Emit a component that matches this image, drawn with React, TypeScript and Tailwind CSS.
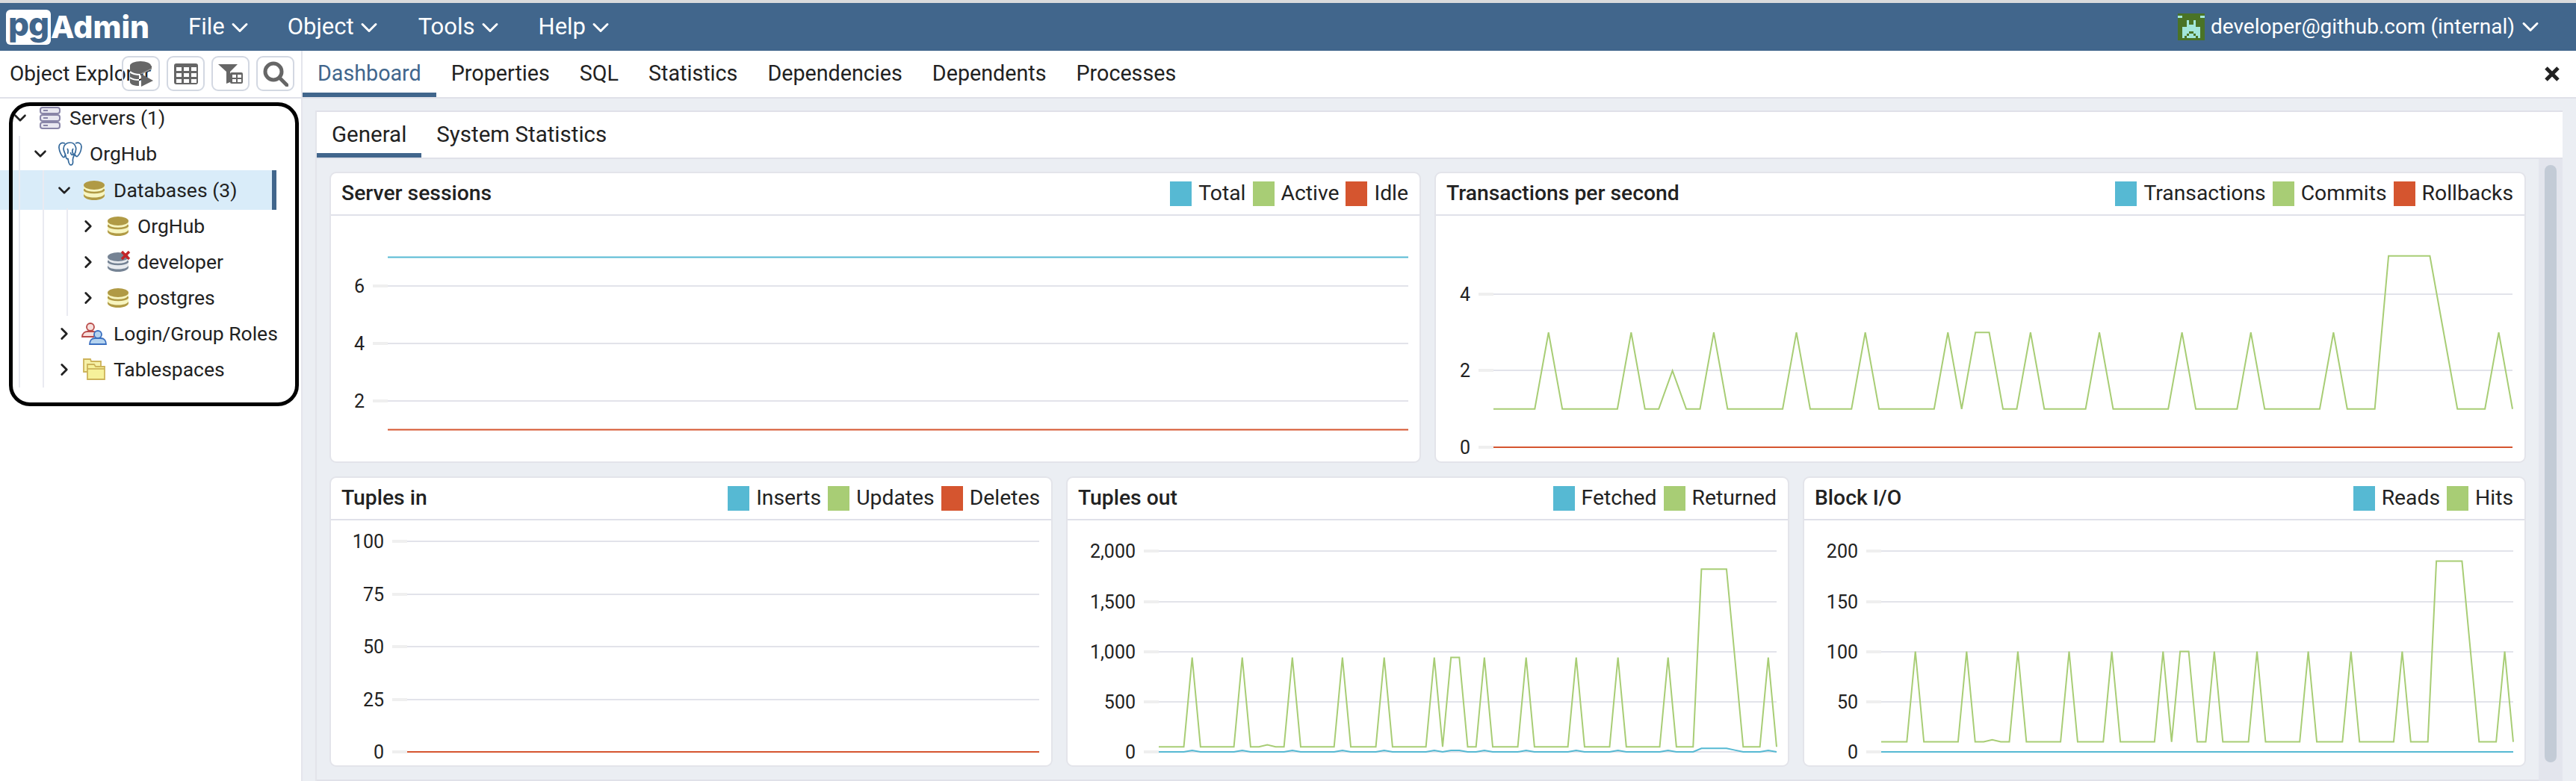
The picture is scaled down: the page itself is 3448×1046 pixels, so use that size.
import { ChevronDown, ChevronRight } from 'lucide-react';
import type { ReactNode } from 'react';

const BLUE = '#56b9d3';
const GREEN = '#a8cd75';
const ORANGE = '#d5552f';

const PEAKS = [4, 10, 16, 22, 27, 33, 35, 36, 39, 44, 50, 55, 61, 73];

// same traffic shape in every chart, only the values differ
const series = (base: number, peak: number, small: number, top: number) => {
  const out: number[] = Array(75).fill(base);
  PEAKS.forEach((i) => (out[i] = peak));
  out[13] = small;
  [65, 66, 67, 68].forEach((i) => (out[i] = top));
  out[69] = (top + base) / 2;
  return out;
};

interface Tick {
  label: string;
  y: number;
}

interface ChartProps {
  width: number;
  height: number;
  x0: number;
  x1: number;
  ticks: Tick[];
  // value to y: two reference points
  scale: [number, number, number, number];
  lines: { color: string; values: number[] }[];
}

const Chart = ({ width, height, x0, x1, ticks, scale, lines }: ChartProps) => {
  const [v0, y0, v1, y1] = scale;
  const toY = (v: number) => y0 + ((v - v0) / (v1 - v0)) * (y1 - y0);
  return (
    <svg width={width} height={height} className="block">
      {ticks.map((t) => (
        <g key={t.label}>
          <rect x={x0 - 20} y={t.y - 2} width={20} height={4} fill="#efefef" />
          <rect x={x0} y={t.y - 1} width={x1 - x0} height={2} fill="#e2e3ea" />
          <text x={x0 - 31} y={t.y + 9} textAnchor="end" fontSize={25} fill="#222">
            {t.label}
          </text>
        </g>
      ))}
      {lines.map((l) => (
        <polyline
          key={l.color}
          fill="none"
          stroke={l.color}
          strokeWidth={2}
          points={l.values
            .map((v, i) => `${x0 + ((x1 - x0) * i) / (l.values.length - 1)},${toY(v)}`)
            .join(' ')}
        />
      ))}
    </svg>
  );
};

const Card = ({
  title,
  legend,
  className,
  children,
}: {
  title: string;
  legend: [string, string][];
  className: string;
  children: ReactNode;
}) => (
  <div className={`flex flex-col rounded-[9px] border-2 border-[#e3e4ea] bg-white overflow-hidden ${className}`}>
    <div className="flex items-center justify-between h-[57px] pl-[14px] pr-[15px] border-b-2 border-[#e0e1e9] shrink-0">
      <span className="text-[28.300px] font-medium text-[#222]">{title}</span>
      <div className="flex items-center gap-[9px]">
        {legend.map(([name, color]) => (
          <div key={name} className="flex items-center gap-[9px]">
            <span className="w-[29px] h-[33px]" style={{ background: color }} />
            <span className="text-[28.300px] text-[#222]">{name}</span>
          </div>
        ))}
      </div>
    </div>
    {children}
  </div>
);

const DbIcon = ({ dark = '#b09a45', light = '#f7f5c0' }: { dark?: string; light?: string }) => (
  <svg width="28" height="26" viewBox="0 0 28 26" className="shrink-0">
    <path d="M0 6v14c0 3.3 6.3 6 14 6s14-2.7 14-6V6z" fill={light} />
    <ellipse cx="14" cy="6" rx="14" ry="6" fill={dark} />
    <path d="M0 11.5c2 3 7 4.5 14 4.5s12-1.5 14-4.5" fill="none" stroke={dark} strokeWidth="2.6" />
    <path d="M0 18c2 3 7 4.500 14 4.500s12-1.500 14-4.500v2c0 3.300-6.300 6-14 6S0 23.300 0 20z" fill={dark} />
  </svg>
);

const ServersIcon = () => (
  <svg width="28" height="30" viewBox="0 0 28 30" className="shrink-0">
    {[1, 11, 21].map((y) => (
      <g key={y}>
        <rect x="1" y={y} width="26" height="8" rx="3" fill="#e9e8f1" stroke="#8985a8" strokeWidth="2" />
        <rect x="5" y={y + 3} width="6" height="2" fill="#8985a8" />
      </g>
    ))}
  </svg>
);

const ElephantIcon = () => (
  <svg width="32" height="32" viewBox="0 0 32 32" className="shrink-0" fill="#fff" stroke="#33689b" strokeWidth="1.700" strokeLinejoin="round">
    <path d="M9 2C4 0 .5 3 1 8c.5 4 2.500 9 5 12 2 2 3-1 3.500-3" />
    <path d="M23 2c4-2 8.500 0 8 5-.5 5-3 10-5 12-1.500 1.500-3 0-3.500-2" />
    <path d="M16 1c-5 0-9 3-9 8 0 4 2.500 6 3 10 .3 3 1.500 4 3 3.500.5 3 .5 6 2.500 8 3 1.500 4.500-1 4-5-.3-2 0-4 1.500-7 2-4 3.500-7 2.500-11-1-4-3.500-6.500-7.500-6.500z" />
    <path d="M12 9c1.500 2 1.500 4 .5 7M20 9c-1.500 2-1.500 5 .5 8-2 1-4 0-4-3" fill="none" />
  </svg>
);

const RolesIcon = () => (
  <svg width="34" height="30" viewBox="0 0 34 30" className="shrink-0" strokeWidth="1.800">
    <circle cx="12" cy="6" r="5" fill="#f7dfdc" stroke="#b94a48" />
    <path d="M1 19c0-5 4-7 7-7h8c2 0 3 1 4 2l-4 5z" fill="#f7dfdc" stroke="#b94a48" />
    <circle cx="22" cy="16" r="5" fill="#b5d3ef" stroke="#3a6fc0" />
    <path d="M11 29c0-5 3-8 7-8h8c4 0 7 3 7 8z" fill="#b5d3ef" stroke="#3a6fc0" />
  </svg>
);

const FolderIcon = () => (
  <svg width="30" height="30" viewBox="0 0 30 30" className="shrink-0" stroke="#cdb35a" strokeWidth="1.800">
    <path d="M1 3V1h9l1 3h13v14H1z" fill="#f6f1a8" />
    <path d="M6 10V8h9l2 3h12v17H6z" fill="#f6f19a" />
    <path d="M6 14h23" />
  </svg>
);

const Row = ({
  depth,
  open,
  icon,
  label,
  selected,
}: {
  depth: number;
  open?: boolean;
  icon: ReactNode;
  label: string;
  selected?: boolean;
}) => (
  <div
    className={`flex items-center w-[370px] ${
      selected
        ? 'h-[53px] mt-[-2px] mb-[-2px] bg-[#d9ecf9] border-r-[6px] border-[#41668c]'
        : 'h-[48px]'
    } ${depth === 0 ? 'pl-[14px]' : 'pl-[25px]'}`}
  >
    {Array.from({ length: depth }).map((_, i) => (
      <span
        key={i}
        className={`h-full shrink-0 border-l-2 border-[#e9eaf1] ${i === depth - 1 ? 'w-[16px]' : 'w-[32px]'}`}
      />
    ))}
    <span className="w-[26px] flex justify-center shrink-0">
      {open ? (
        <ChevronDown size={32} strokeWidth={2.400} color="#222" />
      ) : (
        <ChevronRight size={32} strokeWidth={2.600} color="#222" />
      )}
    </span>
    <span className="w-[53px] flex justify-center shrink-0">{icon}</span>
    <span className="text-[26.500px] text-[#222] whitespace-nowrap">{label}</span>
  </div>
);

const ToolButton = ({ children }: { children: ReactNode }) => (
  <button className="w-[51px] h-[47px] rounded-[9px] border-2 border-[#d3d8e2] flex items-center justify-center">
    {children}
  </button>
);

const AVATAR = [
  '............',
  '##........##',
  '............',
  '....#..#....',
  '....#..#....',
  '....####....',
  '..########..',
  '..########..',
  '..###..###..',
  '..##.##.##..',
  '..#.####.#..',
  '............',
];

const Avatar = () => (
  <svg width="36" height="36" viewBox="0 0 12 12" shapeRendering="crispEdges">
    <rect width="12" height="12" fill="#4a7326" />
    {AVATAR.flatMap((row, y) =>
      row.split('').map((c, x) => (c === '#' ? <rect key={`${x}-${y}`} x={x} y={y} width="1" height="1" fill="#a3e6da" /> : null))
    )}
  </svg>
);

const NavItem = ({ label, className }: { label: string; className: string }) => (
  <div className={`flex items-center gap-[2px] text-[31px] text-white ${className}`}>
    {label}
    <ChevronDown size={36} strokeWidth={2} color="#fff" className="mt-[2px]" />
  </div>
);

const TABS = ['Dashboard', 'Properties', 'SQL', 'Statistics', 'Dependencies', 'Dependents', 'Processes'];

export default function App() {
  return (
    <div className="flex flex-col w-[3448px] h-[1046px] overflow-hidden bg-white [font-family:Roboto,sans-serif]">
      <div className="h-[4px] bg-[#d9dadc] shrink-0" />
      <div className="flex items-center h-[64px] bg-[#41668c] shrink-0">
        <div className="flex items-center ml-[8px] w-[200px] [font-family:Inter,sans-serif]">
          <div className="flex items-center justify-center w-[60px] h-[47px] rounded-[6px] bg-white text-[#41668c] text-[44px] font-extrabold leading-none tracking-[-1px] pb-[8px]">
            pg
          </div>
          <span className="text-[41px] font-extrabold text-white leading-none">Admin</span>
        </div>
        <NavItem label="File" className="ml-[44px]" />
        <NavItem label="Object" className="ml-[46px]" />
        <NavItem label="Tools" className="ml-[48px]" />
        <NavItem label="Help" className="ml-[47px]" />
        <div className="ml-auto mr-[43px] flex items-center gap-[8px] text-[28px] text-white">
          <Avatar />
          developer@github.com (internal)
          <ChevronDown size={36} strokeWidth={2} color="#fff" className="ml-[-5px]" />
        </div>
      </div>

      <div className="flex flex-1 min-h-0">
        <aside className="relative w-[403px] shrink-0 border-r-2 border-[#e4e5ec] box-content">
          <div className="relative flex items-center h-[62px] pl-[13px] border-b-2 border-[#e0e1e9] box-content">
            <span className="text-[28px] text-[#222] whitespace-nowrap">Object Explorer</span>
            <div className="absolute right-[9px] top-[7px] flex gap-[9px]">
              <ToolButton>
                <svg width="32" height="34" viewBox="0 0 32 34">
                  <path d="M1 6v22c0 3 6 5 12 5V18L30 10V6z" fill="#666" />
                  <ellipse cx="15" cy="6" rx="14" ry="6" fill="#666" />
                  <path d="M1 14c3 3 9 4 14 4M1 22c3 2 8 3 12 3" stroke="#fff" strokeWidth="2" fill="none" />
                  <path d="M16 17l16 9-16 8z" fill="#666" />
                  <path d="M16 17l14-7" stroke="#999" strokeWidth="1.500" />
                </svg>
              </ToolButton>
              <ToolButton>
                <svg width="32" height="28" viewBox="0 0 32 28">
                  <rect width="32" height="28" rx="3" fill="#666" />
                  {[3, 13, 23].map((x) =>
                    [5, 13, 21].map((y) => <rect key={`${x}${y}`} x={x} y={y} width="7" height="5" fill="#fff" />)
                  )}
                </svg>
              </ToolButton>
              <ToolButton>
                <svg width="34" height="26" viewBox="0 0 34 26">
                  <path d="M0 0h26L16 10v14l-5 2V10z" fill="#666" />
                  <rect x="16" y="11" width="17" height="15" rx="2" fill="#666" />
                  <rect x="19" y="14" width="5" height="4" fill="#fff" />
                  <rect x="26" y="14" width="5" height="4" fill="#fff" />
                  <rect x="19" y="20" width="5" height="4" fill="#fff" />
                  <rect x="26" y="20" width="5" height="4" fill="#fff" />
                </svg>
              </ToolButton>
              <ToolButton>
                <svg width="34" height="34" viewBox="0 0 34 34" fill="none" stroke="#666" strokeWidth="5">
                  <circle cx="14" cy="14" r="11" />
                  <path d="M22 22l10 10" strokeLinecap="round" />
                </svg>
              </ToolButton>
            </div>
          </div>
          <div className="flex flex-col pt-[2px]">
            <Row depth={0} open icon={<ServersIcon />} label="Servers (1)" />
            <Row depth={1} open icon={<ElephantIcon />} label="OrgHub" />
            <Row depth={2} open icon={<DbIcon />} label="Databases (3)" selected />
            <Row depth={3} icon={<DbIcon />} label="OrgHub" />
            <Row
              depth={3}
              icon={
                <span className="relative flex">
                  <DbIcon dark="#758394" light="#e8ebef" />
                  <svg width="14" height="14" viewBox="0 0 14 14" className="absolute right-[-3px] top-[-3px]" stroke="#c32528" strokeWidth="3.500">
                    <path d="M2 2l10 10M12 2L2 12" />
                  </svg>
                </span>
              }
              label="developer"
            />
            <Row depth={3} icon={<DbIcon />} label="postgres" />
            <Row depth={2} icon={<RolesIcon />} label="Login/Group Roles" />
            <Row depth={2} icon={<FolderIcon />} label="Tablespaces" />
          </div>
          {/* annotation box drawn over the tree */}
          <div className="absolute left-[12px] top-[69px] w-[388px] h-[407px] rounded-[28px] border-[5px] border-black pointer-events-none" />
        </aside>

        <main className="flex flex-col flex-1 min-w-0">
          <div className="flex items-stretch h-[62px] border-b-2 border-[#e0e1e9] box-content shrink-0">
            {TABS.map((tab, i) => (
              <div
                key={tab}
                className={`flex items-center px-[20px] text-[28.700px] border-b-[6px] pt-[6px] ${
                  i === 0 ? 'text-[#41668c] border-[#41668c]' : 'text-[#222] border-transparent'
                }`}
              >
                {tab}
              </div>
            ))}
            <svg width="20" height="20" viewBox="0 0 20 20" className="ml-auto mr-[22px] self-center" stroke="#222" strokeWidth="5">
              <path d="M2 2l16 16M18 2L2 18" />
            </svg>
          </div>

          <div className="flex flex-1 min-h-0 bg-[#ebeef3] pt-[16px] pl-[17px] pr-[18px]">
            <div className="flex flex-col flex-1 min-w-0 border-l-2 border-[#e3e4ea]">
              <div className="flex items-stretch h-[61px] bg-white border-y-2 border-[#e0e1e9] box-content shrink-0">
                <div className="flex items-center px-[20px] text-[29.500px] text-[#222] border-b-[6px] border-[#41668c] pt-[6px]">General</div>
                <div className="flex items-center px-[20px] text-[29.500px] text-[#222]">System Statistics</div>
              </div>
              <div className="flex flex-1 min-h-0 bg-[#e3e5ed]">
                <div className="flex flex-col w-[2975px] bg-[#ebeef3] pt-[17px] pl-[17px] gap-[18px] border-b-2 border-[#e0e1e9]">
                  <div className="flex gap-[18px] h-[390px] w-[2940px] shrink-0">
                    <Card
                      title="Server sessions"
                      legend={[['Total', BLUE], ['Active', GREEN], ['Idle', ORANGE]]}
                      className="flex-1"
                    >
                      <Chart
                        width={1457}
                        height={329}
                        x0={76}
                        x1={1442}
                        ticks={[{ label: '6', y: 94 }, { label: '4', y: 171 }, { label: '2', y: 248 }]}
                        scale={[6, 94, 2, 248]}
                        lines={[
                          { color: BLUE, values: [7, 7] },
                          { color: ORANGE, values: [1, 1] },
                        ]}
                      />
                    </Card>
                    <Card
                      title="Transactions per second"
                      legend={[['Transactions', BLUE], ['Commits', GREEN], ['Rollbacks', ORANGE]]}
                      className="flex-1"
                    >
                      <Chart
                        width={1457}
                        height={329}
                        x0={77}
                        x1={1441}
                        ticks={[{ label: '4', y: 105 }, { label: '2', y: 207 }, { label: '0', y: 310 }]}
                        scale={[4, 105, 0, 310]}
                        lines={[
                          { color: GREEN, values: series(1, 3, 2, 5) },
                          { color: ORANGE, values: [0, 0] },
                        ]}
                      />
                    </Card>
                  </div>
                  <div className="flex gap-[18px] h-[389px] w-[2940px] shrink-0">
                    <Card
                      title="Tuples in"
                      legend={[['Inserts', BLUE], ['Updates', GREEN], ['Deletes', ORANGE]]}
                      className="flex-1"
                    >
                      <Chart
                        width={964}
                        height={328}
                        x0={102}
                        x1={948}
                        ticks={[
                          { label: '100', y: 28 },
                          { label: '75', y: 99 },
                          { label: '50', y: 169 },
                          { label: '25', y: 240 },
                          { label: '0', y: 310 },
                        ]}
                        scale={[100, 28, 0, 310]}
                        lines={[{ color: ORANGE, values: [0, 0] }]}
                      />
                    </Card>
                    <Card
                      title="Tuples out"
                      legend={[['Fetched', BLUE], ['Returned', GREEN]]}
                      className="flex-1"
                    >
                      <Chart
                        width={964}
                        height={328}
                        x0={122}
                        x1={949}
                        ticks={[
                          { label: '2,000', y: 41 },
                          { label: '1,500', y: 109 },
                          { label: '1,000', y: 176 },
                          { label: '500', y: 243 },
                          { label: '0', y: 310 },
                        ]}
                        scale={[2000, 41, 0, 310]}
                        lines={[
                          { color: GREEN, values: series(50, 940, 70, 1820) },
                          { color: BLUE, values: series(0, 15, 0, 35) },
                        ]}
                      />
                    </Card>
                    <Card
                      title="Block I/O"
                      legend={[['Reads', BLUE], ['Hits', GREEN]]}
                      className="flex-1"
                    >
                      <Chart
                        width={964}
                        height={328}
                        x0={103}
                        x1={949}
                        ticks={[
                          { label: '200', y: 41 },
                          { label: '150', y: 109 },
                          { label: '100', y: 176 },
                          { label: '50', y: 243 },
                          { label: '0', y: 310 },
                        ]}
                        scale={[200, 41, 0, 310]}
                        lines={[
                          { color: GREEN, values: series(10, 100, 12, 190) },
                          { color: BLUE, values: [0, 0] },
                        ]}
                      />
                    </Card>
                  </div>
                </div>
                <div className="w-[32px] bg-[#e3e5ed] pt-[8px] flex justify-center shrink-0">
                  <div className="w-[16px] h-[800px] rounded-full bg-[#c3cbd6]" />
                </div>
              </div>
            </div>
          </div>
        </main>
      </div>
    </div>
  );
}
